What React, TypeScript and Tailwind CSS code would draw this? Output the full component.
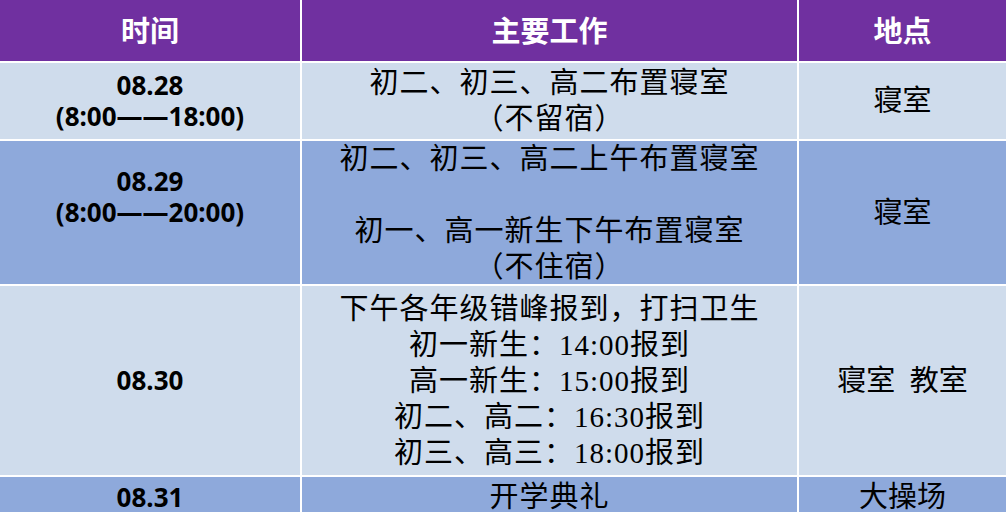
const LIGHT = "bg-[#cfdcec]";
const MID = "bg-[#8ea9db]";

const sans = "font-['Noto_Sans','Noto_Sans_CJK_SC',sans-serif]";
const serif = "font-['Liberation_Serif','Noto_Sans_CJK_SC',serif]";

interface Row {
  date: string[];
  work: string[];
  place: string;
  bg: string;
}

const ROWS: Row[] = [
  {
    date: ["08.28", "(8:00——18:00)"],
    work: ["初二、初三、高二布置寝室", "（不留宿）"],
    place: "寝室",
    bg: LIGHT,
  },
  {
    date: ["08.29", "(8:00——20:00)", "\u00a0"],
    work: ["初二、初三、高二上午布置寝室", "\u00a0", "初一、高一新生下午布置寝室", "（不住宿）"],
    place: "寝室",
    bg: MID,
  },
  {
    date: ["08.30"],
    work: [
      "下午各年级错峰报到，打扫卫生",
      "初一新生：14:00报到",
      "高一新生：15:00报到",
      "初二、高二：16:30报到",
      "初三、高三：18:00报到",
    ],
    place: "寝室  教室",
    bg: LIGHT,
  },
  {
    date: ["08.31"],
    work: ["开学典礼"],
    place: "大操场",
    bg: MID,
  },
];

function Cell({ bg, children, className = "" }: { bg: string; children: React.ReactNode; className?: string }) {
  return (
    <div className={`${bg} flex flex-col items-center justify-center text-center text-black ${className}`}>
      {children}
    </div>
  );
}

export default function App() {
  return (
    <div className="h-[512px] w-[1006px] overflow-hidden bg-white">
      <div className="grid grid-cols-[300px_495px_207px] grid-rows-[61px_76px_143px_189px_40px] gap-[2px] bg-white">
        {["时间", "主要工作", "地点"].map((h) => (
          <div
            key={h}
            className={`flex items-center justify-center bg-[#7030a0] text-[29px] font-bold text-white ${sans}`}
          >
            {h}
          </div>
        ))}
        {ROWS.map((r, i) => (
          <div key={i} className="contents">
            <Cell bg={r.bg} className={`${sans} text-[26px] font-bold leading-[31px]`}>
              {r.date.map((d, j) => (
                <div key={j} className="whitespace-nowrap">
                  {d}
                </div>
              ))}
            </Cell>
            <Cell bg={r.bg} className={`${serif} text-[29px] leading-[36px] tracking-[1px]`}>
              {r.work.map((w, j) => (
                <div key={j} className="whitespace-nowrap">
                  {w}
                </div>
              ))}
            </Cell>
            <Cell bg={r.bg} className={`${serif} whitespace-pre text-[29px] leading-[36px]`}>
              {r.place}
            </Cell>
          </div>
        ))}
      </div>
    </div>
  );
}
